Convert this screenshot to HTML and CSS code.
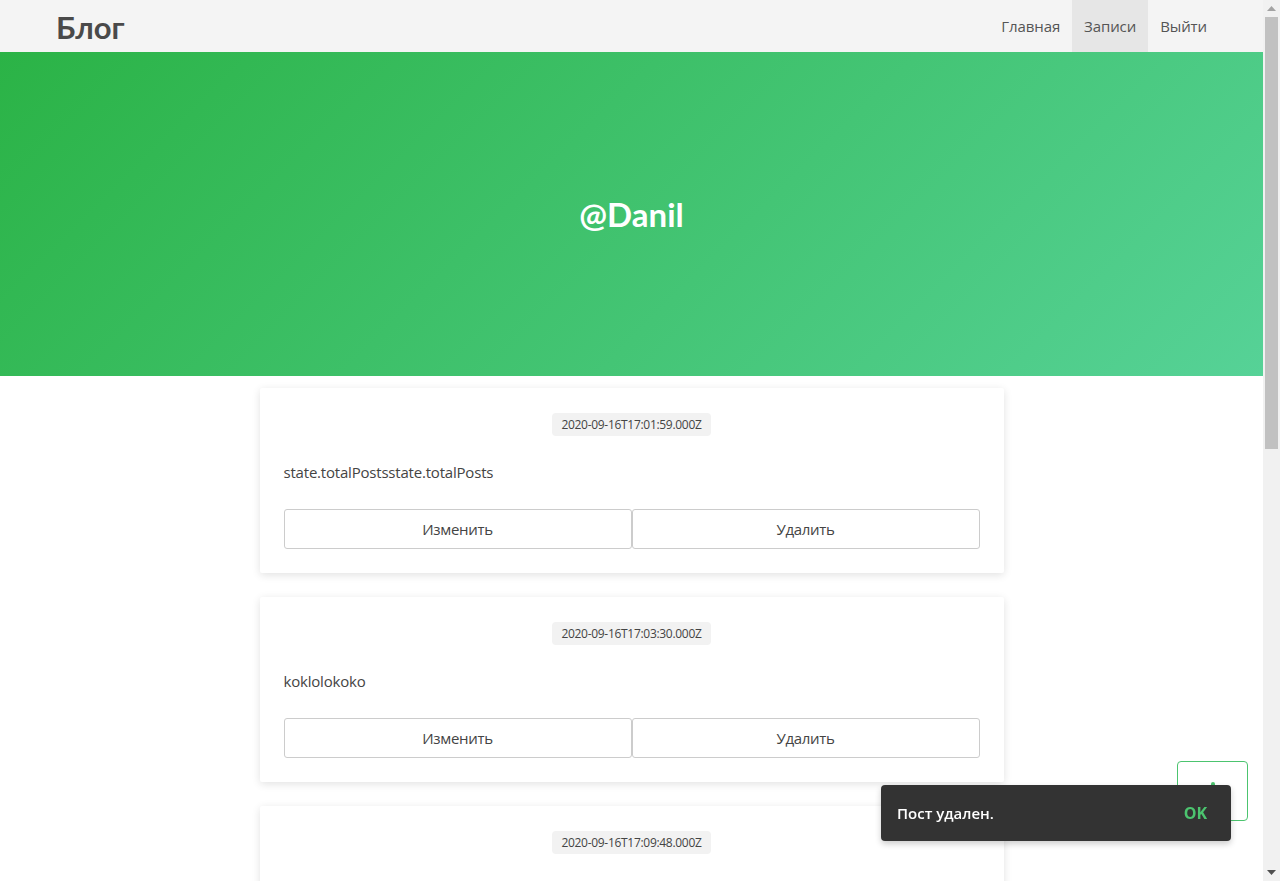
FILE: index.html
```html
<!DOCTYPE html>
<html lang="ru">
<head>
<meta charset="utf-8">
<title>Блог</title>
<link rel="stylesheet" href="styles.css">
</head>
<body>
<header class="navbar">
  <div class="brand">Блог</div>
  <nav class="nav">
    <a class="nav-link" href="#">Главная</a>
    <a class="nav-link active" href="#">Записи</a>
    <a class="nav-link" href="#">Выйти</a>
  </nav>
</header>
<section class="hero">
  <h1 class="hero-title">@Danil</h1>
</section>
<main class="posts">
  <article class="card">
    <div class="date"><span class="badge">2020-09-16T17:01:59.000Z</span></div>
    <p class="text">state.totalPostsstate.totalPosts</p>
    <div class="actions">
      <button class="btn">Изменить</button>
      <button class="btn">Удалить</button>
    </div>
  </article>
  <article class="card">
    <div class="date"><span class="badge">2020-09-16T17:03:30.000Z</span></div>
    <p class="text">koklolokoko</p>
    <div class="actions">
      <button class="btn">Изменить</button>
      <button class="btn">Удалить</button>
    </div>
  </article>
  <article class="card">
    <div class="date"><span class="badge">2020-09-16T17:09:48.000Z</span></div>
    <p class="text">&nbsp;</p>
    <div class="actions">
      <button class="btn">Изменить</button>
      <button class="btn">Удалить</button>
    </div>
  </article>
</main>
<button class="to-top" aria-label="Наверх">
  <svg width="20" height="20" viewBox="0 0 20 20"><path d="M10 2 V18" stroke="#4cc46f" stroke-width="4" stroke-linecap="round" fill="none"/></svg>
</button>
<div class="snackbar">
  <span class="snack-text">Пост удален.</span>
  <button class="snack-btn">OK</button>
</div>
<div class="scrollbar" aria-hidden="true">
  <div class="sb-btn"><svg width="9" height="5" viewBox="0 0 9 5"><path d="M0 5 L4.5 0 L9 5 Z" fill="#a3a3a3"/></svg></div>
  <div class="sb-track"><div class="sb-thumb"></div></div>
  <div class="sb-btn"><svg width="9" height="5" viewBox="0 0 9 5"><path d="M0 0 L4.5 5 L9 0 Z" fill="#505050"/></svg></div>
</div>
</body>
</html>
```
FILE: styles.css
```css
* { box-sizing: border-box; }
html, body { margin: 0; padding: 0; }
body {
  font-family: "Open Sans", "Noto Sans", sans-serif;
  color: #444;
  background: #fff;
  margin-right: 17px;
  min-height: 1727px;
}
.scrollbar {
  position: fixed;
  top: 0;
  right: 0;
  width: 17px;
  height: 100vh;
  background: #f1f1f1;
  display: flex;
  flex-direction: column;
}
.sb-btn {
  height: 17px;
  display: flex;
  align-items: center;
  justify-content: center;
}
.sb-track { flex: 1; padding: 0 2px; }
.sb-thumb { height: 432px; background: #c1c1c1; }
.navbar {
  height: 52px;
  background: #f4f4f4;
  display: flex;
  align-items: stretch;
  justify-content: space-between;
  padding: 0 44px 0 56px;
}
.brand {
  font-family: Lato, "Open Sans", sans-serif;
  font-weight: 700;
  font-size: 31px;
  color: #4a4a4a;
  display: flex;
  align-items: center;
  padding-top: 2px;
}
.nav { display: flex; }
.nav-link {
  display: flex;
  align-items: center;
  padding: 0 12px;
  font-size: 15px;
  color: #555;
  text-decoration: none;
  letter-spacing: -0.1px;
}
.nav-link.active { background: #e6e6e6; }
.hero {
  height: 324px;
  background: linear-gradient(135deg, #2bb346 0%, #56d297 100%);
  display: flex;
  align-items: center;
  justify-content: center;
}
.hero-title {
  margin: 0;
  font-family: Lato, "Open Sans", sans-serif;
  font-weight: 700;
  font-size: 33px;
  color: #fff;
}
.posts {
  width: 744px;
  margin: 12px auto 0;
  display: flex;
  flex-direction: column;
  gap: 24px;
  padding-bottom: 24px;
}
.card {
  background: #fff;
  padding: 24px;
  box-shadow: 0 2px 8px rgba(0, 0, 0, 0.12);
  border-radius: 2px;
}
.date { display: flex; justify-content: center; padding-top: 1px; }
.badge {
  background: #f2f2f2;
  border-radius: 4px;
  font-size: 12px;
  line-height: 23px;
  padding: 0 9px;
  color: #444;
  letter-spacing: -0.3px;
}
.text {
  margin: 24px 0;
  font-size: 15px;
  line-height: 25px;
  color: #444;
  letter-spacing: -0.2px;
}
.actions { display: flex; }
.btn {
  flex: 1;
  height: 40px;
  background: #fff;
  border: 1px solid #ccc;
  border-radius: 3px;
  font-family: inherit;
  font-size: 15px;
  color: #444;
  letter-spacing: -0.3px;
}
.to-top {
  position: fixed;
  left: 1177px;
  top: 761px;
  width: 71px;
  height: 60px;
  background: #fff;
  border: 1px solid #4cc46f;
  border-radius: 4px;
  padding: 0;
  display: flex;
  align-items: flex-start;
  justify-content: center;
  padding-top: 20px;
}
.snackbar {
  position: fixed;
  left: 881px;
  top: 785px;
  width: 350px;
  height: 56px;
  background: #333;
  border-radius: 4px;
  box-shadow: 0 3px 6px rgba(0, 0, 0, 0.2);
  display: flex;
  align-items: center;
  justify-content: space-between;
  padding: 0 16px;
}
.snack-text {
  color: #fff;
  font-size: 15px;
  font-weight: 600;
}
.snack-btn {
  background: none;
  border: none;
  color: #4cc46f;
  font-family: inherit;
  font-weight: 700;
  font-size: 16px;
  padding: 0 8px;
}
```
